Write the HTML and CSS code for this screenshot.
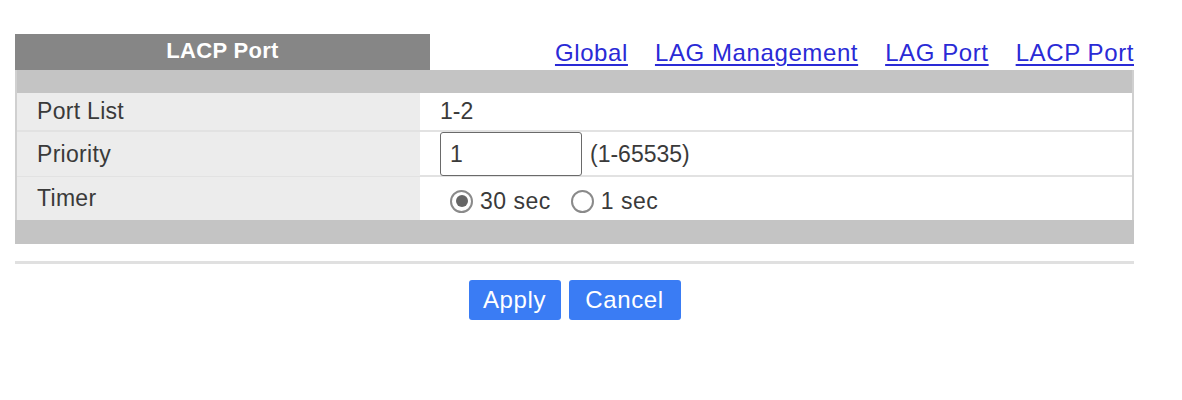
FILE: index.html
```html
<!DOCTYPE html>
<html>
<head>
<meta charset="utf-8">
<link rel="stylesheet" href="styles.css">
</head>
<body>
<div class="page">
  <div class="header">
    <div class="tab">LACP Port</div>
    <nav class="links">
      <a href="#">Global</a>
      <a href="#">LAG Management</a>
      <a href="#">LAG Port</a>
      <a href="#">LACP Port</a>
    </nav>
  </div>
  <div class="panel">
    <div class="bar top"></div>
    <div class="row r1">
      <div class="label">Port List</div>
      <div class="value">1-2</div>
    </div>
    <div class="row r2">
      <div class="label">Priority</div>
      <div class="value"><input class="num" type="text" value="1"><span class="hint">(1-65535)</span></div>
    </div>
    <div class="row r3">
      <div class="label">Timer</div>
      <div class="value">
        <label class="radio"><span class="dot on"></span>30 sec</label>
        <label class="radio"><span class="dot"></span>1 sec</label>
      </div>
    </div>
    <div class="bar bottom"></div>
  </div>
  <div class="rule"></div>
  <div class="actions">
    <button class="btn apply">Apply</button>
    <button class="btn cancel">Cancel</button>
  </div>
</div>
</body>
</html>
```
FILE: styles.css
```css
html, body {
  margin: 0;
  padding: 0;
  background: #ffffff;
}
.page {
  width: 1119px;
  margin-left: 15px;
  font-family: "Liberation Sans", Arial, sans-serif;
  color: #3a3a3a;
}
.header {
  display: flex;
  align-items: flex-end;
  justify-content: space-between;
  padding-top: 34px;
}
.tab {
  width: 415px;
  height: 36px;
  background: #868686;
  color: #ffffff;
  font-weight: bold;
  font-size: 22px;
  letter-spacing: 0.3px;
  display: flex;
  align-items: center;
  justify-content: center;
  padding-bottom: 2px;
  box-sizing: border-box;
}
.links {
  display: flex;
  gap: 27px;
  padding-bottom: 3px;
}
.links a {
  color: #2a2ad6;
  font-size: 24px;
  letter-spacing: 0.6px;
  text-decoration: underline;
  text-decoration-thickness: 2px;
  text-underline-offset: 3px;
}
.panel {
  border-left: 2px solid #d0d0d0;
  border-right: 2px solid #d0d0d0;
}
.bar {
  background: #c4c4c4;
}
.bar.top { height: 23px; }
.bar.bottom { height: 24px; margin-left: -2px; margin-right: -2px; }
.row {
  display: grid;
  grid-template-columns: 403px 1fr;
  border-bottom: 2px solid #e2e2e2;
}
.row.r3 { border-bottom: none; }
.row.r1 { height: 37px; }
.row.r2 { height: 43px; }
.row.r3 { height: 43px; }
.label {
  background: #ececec;
  padding-left: 20px;
  font-size: 23px;
  letter-spacing: 0.3px;
  display: flex;
  align-items: center;
}
.value {
  padding-left: 20px;
  font-size: 23px;
  display: flex;
  align-items: center;
}
.num {
  width: 142px;
  height: 44px;
  box-sizing: border-box;
  border: 1.5px solid #6a6a6a;
  border-radius: 3px;
  font-family: "Liberation Sans", Arial, sans-serif;
  font-size: 23px;
  color: #3a3a3a;
  padding: 0 9px;
  margin: 0 8px 0 0;
}
.radio {
  display: inline-flex;
  align-items: center;
  margin-left: 10px;
  padding-top: 5px;
  letter-spacing: 0.5px;
}
.radio + .radio { margin-left: 20px; }
.dot {
  width: 23px;
  height: 23px;
  border: 2px solid #8a8a8a;
  border-radius: 50%;
  box-sizing: border-box;
  margin-right: 7px;
  background: #fff;
  position: relative;
}
.dot.on::after {
  content: "";
  position: absolute;
  left: 3.5px;
  top: 3.5px;
  width: 12px;
  height: 12px;
  border-radius: 50%;
  background: #666;
}
.rule {
  height: 3px;
  background: #e0e0e0;
  margin-top: 17px;
}
.actions {
  display: flex;
  justify-content: center;
  gap: 8px;
  margin-top: 16px;
}
.btn {
  background: #3a7cf4;
  color: #ffffff;
  border: none;
  border-radius: 3px;
  height: 40px;
  padding: 0;
  font-family: "Liberation Sans", Arial, sans-serif;
  font-size: 24px;
  letter-spacing: 0.6px;
}
.btn.apply { width: 92px; }
.btn.cancel { width: 112px; }
```
